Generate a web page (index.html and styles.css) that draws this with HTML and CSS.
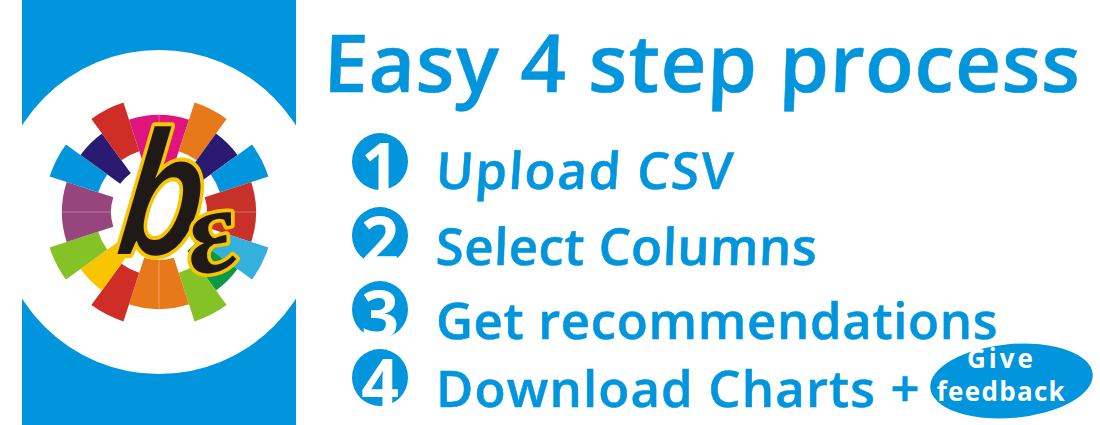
FILE: index.html
```html
<!DOCTYPE html>
<html lang="en">
<head>
<meta charset="utf-8">
<title>Easy 4 step process</title>
<link rel="stylesheet" href="styles.css">
</head>
<body>
<main class="page">
  <aside class="panel">
    <svg class="logo" viewBox="-137 -212 274 425" width="274" height="425" aria-label="logo">
      <defs>
        <path id="lw" d="M-18 -113.6A115 115 0 0 1 18 -113.6L10 -63.2A64 64 0 0 0 -10 -63.2Z"/>
        <path id="sw" d="M-15.2 -95.8A97 97 0 0 1 15.2 -95.8L7.5 -47.4A48 48 0 0 0 -7.5 -47.4Z"/>
        <path id="dw" d="M-30 -92.3A97 97 0 0 1 30 -92.3L14.8 -45.7A48 48 0 0 0 -14.8 -45.7Z"/>
      </defs>
      <circle class="disc" r="162"/>
      <use href="#dw" class="c-magenta"/>
      <use href="#lw" class="c-orange" transform="rotate(27)"/>
      <use href="#sw" class="c-navy" transform="rotate(45)"/>
      <use href="#lw" class="c-blue" transform="rotate(63)"/>
      <use href="#dw" class="c-brick" transform="rotate(90)"/>
      <use href="#lw" class="c-sky" transform="rotate(117)"/>
      <use href="#sw" class="c-green" transform="rotate(135)"/>
      <use href="#lw" class="c-lime" transform="rotate(153)"/>
      <use href="#dw" class="c-orange" transform="rotate(180)"/>
      <use href="#lw" class="c-red" transform="rotate(207)"/>
      <use href="#sw" class="c-yellow" transform="rotate(225)"/>
      <use href="#lw" class="c-lime" transform="rotate(243)"/>
      <use href="#dw" class="c-plum" transform="rotate(270)"/>
      <use href="#lw" class="c-blue" transform="rotate(297)"/>
      <use href="#sw" class="c-navy" transform="rotate(315)"/>
      <use href="#lw" class="c-red" transform="rotate(333)"/>
      <path class="seam" d="M0 -97V-48M0 48V97M-97 0H-48M48 0H97"/>
      <text class="mark mark-b" transform="translate(-45 42) skewX(-6) scale(.88 1)">b</text>
      <text class="mark mark-e" transform="translate(34 64) rotate(-12) scale(1.25 1.2)">ε</text>
    </svg>
  </aside>
  <section class="content">
    <h1 class="title">Easy 4 step process</h1>
    <ol class="steps">
      <li class="step step-1"><span class="num">1</span><span class="label">Upload CSV</span></li>
      <li class="step step-2"><span class="num">2</span><span class="label">Select Columns</span></li>
      <li class="step step-3"><span class="num">3</span><span class="label">Get recommendations</span></li>
      <li class="step step-4"><span class="num">4</span><span class="label">Download Charts +</span><a class="feedback"><span class="fb-top">Give</span><span>feedback</span></a></li>
    </ol>
  </section>
</main>
</body>
</html>
```
FILE: styles.css
```css
html, body { margin: 0; padding: 0; background: #fff; }
body { width: 1100px; height: 425px; overflow: hidden; font-family: "Open Sans", sans-serif; color: #0095DD; }
.page { display: flex; height: 425px; padding-left: 22px; box-sizing: border-box; }
.panel { width: 274px; height: 425px; background: #0095DD; flex: none; overflow: hidden; }
.logo { display: block; }
.disc { fill: #fff; }
.c-magenta { fill: #E0147F; }
.c-orange { fill: #E8791A; }
.c-navy { fill: #2A1A72; }
.c-blue { fill: #0095DD; }
.c-brick { fill: #C8302A; }
.c-sky { fill: #33B0DC; }
.c-green { fill: #0A9A45; }
.c-lime { fill: #85C226; }
.c-red { fill: #CF2E27; }
.c-yellow { fill: #F8C500; }
.c-plum { fill: #96467C; }
.seam { stroke: #fff; stroke-opacity: .3; stroke-width: 1; fill: none; }
.mark { font-style: italic; fill: #1F1A17; stroke: #F8C500; stroke-width: 7px; paint-order: stroke; stroke-linejoin: round; }
.mark-b { font-family: "Open Sans", sans-serif; font-weight: 600; font-size: 168px; stroke-width: 8px; }
.mark-e { font-family: "Liberation Serif", serif; font-weight: 700; font-size: 100px; stroke-width: 6px; }
.content { flex: 1; padding: 11px 0 0 26px; min-width: 0; }
.title { margin: 0; font-size: 80px; line-height: 100px; font-weight: 600; letter-spacing: .7px; -webkit-text-stroke: .5px #0095DD; white-space: nowrap; transform: skewX(-2deg); transform-origin: left bottom; }
.steps { list-style: none; margin: 22px 0 0; padding: 0 0 0 30px; }
.step { display: flex; align-items: center; height: 57px; margin-bottom: 17px; }
.step-3 { margin-bottom: 11px; }
.num { flex: none; width: 56px; height: 57px; border-radius: 50%; background: #0095DD; color: #fff; font-size: 66px; font-weight: 700; line-height: 65px; text-align: center; }
.label { margin: 19px 0 0 28px; font-size: 51px; font-weight: 600; line-height: 57px; -webkit-text-stroke: .5px #0095DD; white-space: nowrap; }
.step-1 .label { margin-top: 16px; letter-spacing: 1.7px; transform: skewX(-4deg); }
.step-2 .label { margin-top: 19px; letter-spacing: .4px; transform: skewX(-2deg); }
.step-3 .label { letter-spacing: .6px; }
.step-4 .label { letter-spacing: 1.1px; }
.feedback { position: relative; flex: none; width: 163px; height: 74px; margin: 6px 0 0 9px; padding-right: 20px; box-sizing: border-box; display: flex; flex-direction: column; align-items: center; color: #fff; font-size: 26px; font-weight: 700; line-height: 33px; letter-spacing: 1.3px; }
.feedback::before { content: ""; position: absolute; inset: 0; border-radius: 50%; background: #0095DD; transform: rotate(-5deg); }
.feedback span { position: relative; }
.feedback .fb-top { margin-top: -2px; letter-spacing: 3px; }
```
